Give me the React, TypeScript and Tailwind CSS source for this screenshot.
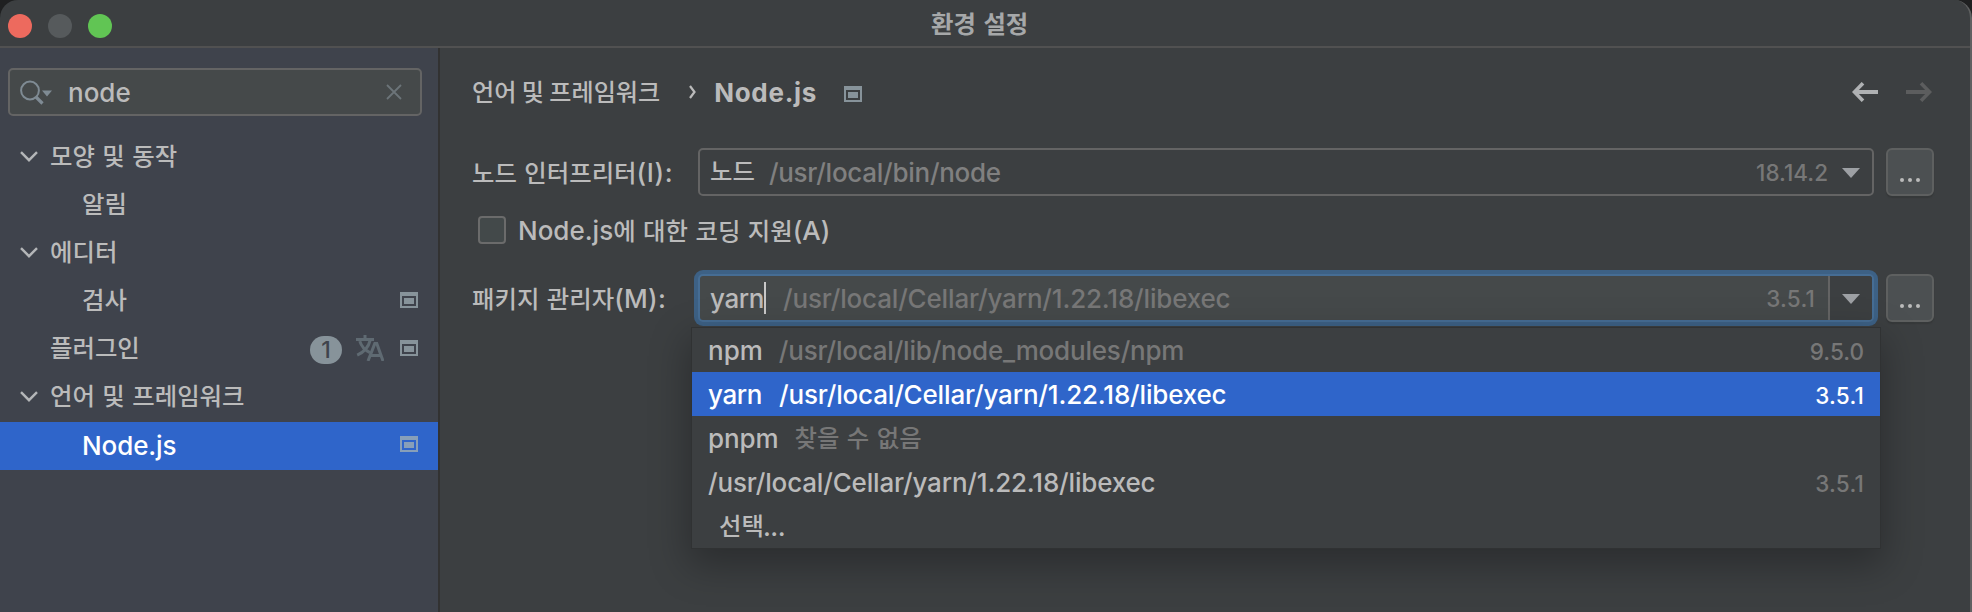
import React from 'react';

type Kids = { children?: React.ReactNode; className?: string };

/** Hangul run */
const Ko = ({ children, className = 'text-[24.4px] [word-spacing:2px]' }: Kids) => (
  <span className={`font-['Noto_Sans_CJK_KR',sans-serif] ${className}`}>{children}</span>
);

/** Latin run */
const En = ({ children, className = '' }: Kids) => (
  <span className={`font-[Inter,sans-serif] ${className}`}>{children}</span>
);

const ProjectIcon = ({ className = 'text-[#87939a]' }: { className?: string }) => (
  <svg width="18" height="16" viewBox="0 0 18 16" className={`shrink-0 ${className}`} shapeRendering="crispEdges">
    <path fill="currentColor" fillRule="evenodd" d="M0 0h18v16H0zM2 4v10h14V4zM4 6h10v6H4z" />
  </svg>
);

const Chevron = () => (
  <svg width="18" height="11" viewBox="0 0 18 11" className="-mt-[3px] shrink-0" fill="none" stroke="#b4b6b8" strokeWidth="2.4">
    <path d="M1 1.2 9 9.2 17 1.2" />
  </svg>
);

const Triangle = () => (
  <svg width="18" height="10" viewBox="0 0 18 10" className="mt-[1px] shrink-0">
    <path d="M0 0h18L9 10z" fill="#9da0a4" />
  </svg>
);

const Translate = () => (
  <svg width="28" height="26" viewBox="0 0 28 26" className="shrink-0" fill="none" stroke="#5f6a72" strokeWidth="3">
    <path d="M0 4.4h18M9 0v4.4M3.8 6.2C5.5 12 9.5 15.600 14 17.600M14.200 5.200C12.500 12.500 8 17.200 1.200 20.200" />
    <path d="M12 26 18.800 8.600h2L27 26M14.500 20.400h10.500" />
  </svg>
);

const Group = ({ children }: Kids) => (
  <div className="flex h-12 items-center pl-5">
    <Chevron />
    <div className="ml-3 -mt-[6px]">{children}</div>
  </div>
);

const MoreButton = () => (
  <button className="flex h-12 w-12 shrink-0 items-center justify-center gap-1 rounded-[6px] border-2 border-[#5e6060] bg-[#4c5052] pt-[15px] shadow-[0_2px_1px_#36393a]">
    <i className="h-1 w-1 rounded-full bg-[#bbbbbb]" />
    <i className="h-1 w-1 rounded-full bg-[#bbbbbb]" />
    <i className="h-1 w-1 rounded-full bg-[#bbbbbb]" />
  </button>
);

const Version = ({ children, className = 'text-[#777777]' }: Kids) => (
  <En className={`ml-auto pt-[2px] text-[22.5px] ${className}`}>{children}</En>
);

export default function App() {
  return (
    <div className="h-[612px] w-[1972px] overflow-hidden bg-[#1f2021] leading-none font-[450] whitespace-pre text-[#bbbbbb]">
      <div className="flex h-full flex-col rounded-t-[18px] border-r-2 border-[#5f6061] bg-[#3c3f41]">
        <header className="flex h-12 shrink-0 items-center border-b-2 border-[#515151] pt-[6px] pl-2">
          <div className="flex w-[104px] shrink-0 gap-4">
            <i className="h-6 w-6 shrink-0 rounded-full bg-[#ed6a5e]" />
            <i className="h-6 w-6 shrink-0 rounded-full bg-[#565a5c]" />
            <i className="h-6 w-6 shrink-0 rounded-full bg-[#61c554]" />
          </div>
          <h1 className="-mt-[6px] ml-[819px]">
            <Ko className="text-[24.4px] font-bold text-[#a6a8a9] [word-spacing:2px]">환경 설정</Ko>
          </h1>
        </header>

        <div className="flex min-h-0 flex-1">
          <aside className="w-[440px] shrink-0 border-r-2 border-[#323232] bg-[#3f434c] pt-5 text-[26px]">
            <div className="ml-2 flex h-12 w-[414px] items-center rounded-[5px] border-2 border-[#646464] bg-[#45494a] pl-[10px]">
              <svg width="32" height="26" viewBox="0 0 32 26" className="mt-[1px]">
                <circle cx="10" cy="10.500" r="8.900" fill="none" stroke="#7f8b94" strokeWidth="2" />
                <path d="m16 17 6.500 6.500" stroke="#7f8b94" strokeWidth="3.200" />
                <path d="M22 10.500h10l-5 6z" fill="#7f8b94" />
              </svg>
              <En className="mt-[2px] ml-4">node</En>
              <svg width="16" height="16" viewBox="0 0 16 16" className="mr-[18px] ml-auto" stroke="#6c7479" strokeWidth="1.800">
                <path d="m1 1 14 14M15 1 1 15" />
              </svg>
            </div>
            <nav className="mt-[18px]">
              <Group><Ko>모양 및 동작</Ko></Group>
              <div className="flex h-12 items-center pl-[82px]"><Ko className="-mt-[6px] text-[24.4px]">알림</Ko></div>
              <Group><Ko>에디터</Ko></Group>
              <div className="flex h-12 items-center justify-between pr-5 pl-[82px]">
                <Ko className="-mt-[6px] text-[24.4px]">검사</Ko>
                <ProjectIcon className="-mt-1 text-[#87939a]" />
              </div>
              <div className="flex h-12 items-center pr-5 pl-[50px]">
                <Ko className="-mt-[5px] text-[24.4px]">플러그인</Ko>
                <div className="ml-auto flex h-7 w-8 items-center justify-center rounded-full bg-[#87939a] text-[23px] text-[#3f434c]"><En>1</En></div>
                <div className="-mt-1 mr-4 ml-[14px]"><Translate /></div>
                <ProjectIcon className="-mt-1 text-[#87939a]" />
              </div>
              <Group><Ko>언어 및 프레임워크</Ko></Group>
              <div className="flex h-12 items-center justify-between bg-[#2f65ca] pr-5 pl-[82px] text-white">
                <En className="tracking-[-0.1px]">Node.js</En>
                <ProjectIcon className="-mt-1 text-[#879fb9]" />
              </div>
            </nav>
          </aside>

          <main className="min-w-0 flex-1 pr-9 pl-8 text-[26px]">
            <div className="flex h-[92px] items-center pb-[2px]">
              <Ko className="-mt-[4px] text-[24.1px]">언어 및 프레임워크</Ko>
              <svg width="8" height="14" viewBox="0 0 8 14" className="-mt-[2px] ml-[29px]" fill="none" stroke="#bbbbbb" strokeWidth="2.200">
                <path d="M1 1 5.500 7 1 13" />
              </svg>
              <En className="ml-[17px] font-bold tracking-[0.7px]">Node.js</En>
              <div className="mt-[2px] ml-[27px]"><ProjectIcon /></div>
              <svg width="26" height="20" viewBox="0 0 26 20" className="-mt-[2px] ml-auto" fill="none" stroke="#afb1b3" strokeWidth="4">
                <path d="M2 10h24" /><path d="M11 1.200 2.400 10l8.600 8.800" strokeWidth="3.600" />
              </svg>
              <svg width="26" height="20" viewBox="0 0 26 20" className="-mt-[2px] mr-[2px] ml-7" fill="none" stroke="#5c5d5e" strokeWidth="4">
                <path d="M0 10h24" /><path d="m15 1.200 8.600 8.800-8.600 8.800" strokeWidth="3.600" />
              </svg>
            </div>

            <div className="mt-2 flex h-12 items-center">
              <div className="w-[226px]"><Ko>노드 인터프리터</Ko><En className="tracking-[0.6px]">(I):</En></div>
              <div className="flex h-12 w-[1176px] items-center rounded-[5px] border-2 border-[#646464] pr-3 pl-[10px]">
                <Ko className="-mt-[3px] text-[24.4px]">노드</Ko>
                <En className="ml-[14px] pt-[2px] tracking-[-0.27px] text-[#808080]">/usr/local/bin/node</En>
                <Version>18.14.2</Version>
                <div className="ml-[14px]"><Triangle /></div>
              </div>
              <div className="ml-3"><MoreButton /></div>
            </div>

            <label className="mt-5 flex h-7 items-center pl-[6px]">
              <span className="h-7 w-7 rounded-[4px] border-2 border-[#6b6b6b] bg-[#43494a]" />
              <span className="ml-[12px]"><En>Node.js</En><Ko>에 대한 코딩 지원</Ko><En>(A)</En></span>
            </label>

            <div className="relative mt-[30px] flex h-12 items-center">
              <div className="w-[226px]"><Ko>패키지 관리자</Ko><En className="tracking-[0.3px]">(M):</En></div>
              <div className="flex h-12 w-[1176px] items-center rounded-[5px] border-2 border-[#466d94] bg-[#45494a] pl-[10px] ring-4 ring-[#3d6185]">
                <En className="pt-[2px] tracking-[-0.4px]">yarn</En>
                <i className="h-8 w-[2px] bg-[#c8c8c8]" />
                <En className="ml-[17px] pt-[2px] tracking-[-0.17px] text-[#777777]">/usr/local/Cellar/yarn/1.22.18/libexec</En>
                <Version className="tracking-[0.2px] text-[#777777]">3.5.1</Version>
                <div className="ml-[13px] flex h-11 w-11 items-center justify-center rounded-r-[3px] border-l-2 border-[#646464] bg-[#3c3f41]"><Triangle /></div>
              </div>
              <div className="ml-3"><MoreButton /></div>

              <ul className="absolute top-[54px] left-[220px] h-[220px] w-[1188px] bg-[#3c3f41] shadow-[0_0_0_1px_#303233,0_14px_36px_4px_rgba(0,0,0,0.28)]">
                <li className="flex h-11 items-center pt-[2px] pr-4 pl-4">
                  <En>npm</En><En className="ml-[16px] tracking-[-0.2px] text-[#777777]">/usr/local/lib/node_modules/npm</En>
                  <Version>9.5.0</Version>
                </li>
                <li className="flex h-11 items-center bg-[#2f65ca] pt-[2px] pr-4 pl-4 font-medium text-white">
                  <En className="tracking-[-0.4px]">yarn</En><En className="ml-[17px] tracking-[-0.17px]">/usr/local/Cellar/yarn/1.22.18/libexec</En>
                  <Version className="tracking-[0.2px] text-white">3.5.1</Version>
                </li>
                <li className="flex h-11 items-center pt-[2px] pr-4 pl-4">
                  <En className="tracking-[-0.1px]">pnpm</En><Ko className="-mt-1 ml-[16px] text-[24.4px] text-[#777777] [word-spacing:2px]">찾을 수 없음</Ko>
                </li>
                <li className="flex h-11 items-center pt-[2px] pr-4 pl-4">
                  <En className="tracking-[-0.17px]">/usr/local/Cellar/yarn/1.22.18/libexec</En>
                  <Version className="tracking-[0.2px] text-[#777777]">3.5.1</Version>
                </li>
                <li className="flex h-11 items-center pt-[2px] pr-4 pl-[27px]">
                  <Ko className="-mt-1 text-[24.4px]">선택</Ko><En className="-ml-[1px] tracking-[-0.5px]">...</En>
                </li>
              </ul>
            </div>
          </main>
        </div>
      </div>
    </div>
  );
}
